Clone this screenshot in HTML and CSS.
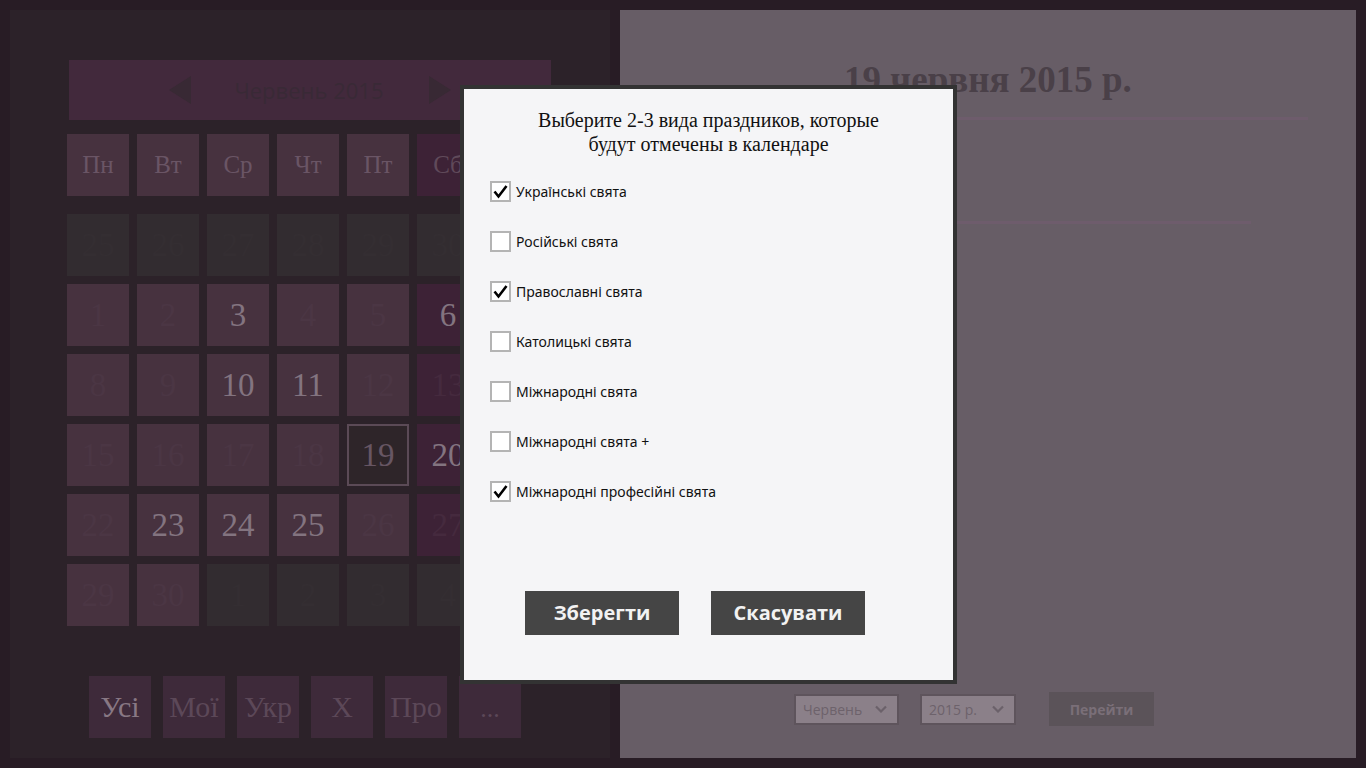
FILE: index.html
```html
<!DOCTYPE html>
<html lang="uk">
<head>
<meta charset="utf-8">
<title>Календар свят</title>
<link rel="stylesheet" href="styles.css">
</head>
<body>
<div class="screen">
  <section class="left">
    <div class="month-bar">
      <span class="arrow arrow-left"></span>
      <span class="month-name">Червень 2015</span>
      <span class="arrow arrow-right"></span>
    </div>
    <div class="grid names">
      <div class="cell name">Пн</div>
      <div class="cell name">Вт</div>
      <div class="cell name">Ср</div>
      <div class="cell name">Чт</div>
      <div class="cell name">Пт</div>
      <div class="cell name we">Сб</div>
      <div class="cell name we">Нд</div>
    </div>
    <div class="grid days">
      <div class="cell other">25</div>
      <div class="cell other">26</div>
      <div class="cell other">27</div>
      <div class="cell other">28</div>
      <div class="cell other">29</div>
      <div class="cell other">30</div>
      <div class="cell other">31</div>

      <div class="cell">1</div>
      <div class="cell">2</div>
      <div class="cell hi">3</div>
      <div class="cell">4</div>
      <div class="cell">5</div>
      <div class="cell we hi">6</div>
      <div class="cell we hi">7</div>

      <div class="cell">8</div>
      <div class="cell">9</div>
      <div class="cell hi">10</div>
      <div class="cell hi">11</div>
      <div class="cell">12</div>
      <div class="cell we">13</div>
      <div class="cell we">14</div>

      <div class="cell">15</div>
      <div class="cell">16</div>
      <div class="cell">17</div>
      <div class="cell">18</div>
      <div class="cell today">19</div>
      <div class="cell we hi">20</div>
      <div class="cell we">21</div>

      <div class="cell">22</div>
      <div class="cell hi">23</div>
      <div class="cell hi">24</div>
      <div class="cell hi">25</div>
      <div class="cell">26</div>
      <div class="cell we">27</div>
      <div class="cell we hi">28</div>

      <div class="cell">29</div>
      <div class="cell">30</div>
      <div class="cell other">1</div>
      <div class="cell other">2</div>
      <div class="cell other">3</div>
      <div class="cell other">4</div>
      <div class="cell other">5</div>
    </div>
    <div class="filters">
      <div class="filter active">Усі</div>
      <div class="filter">Мої</div>
      <div class="filter">Укр</div>
      <div class="filter">Х</div>
      <div class="filter">Про</div>
      <div class="filter dots">...</div>
    </div>
  </section>

  <section class="right">
    <h1 class="date-title">19 червня 2015 р.</h1>
    <div class="rule rule-1"></div>
    <div class="rule rule-2"></div>
    <div class="spacer"></div>
    <div class="nav-row">
      <div class="select sel-month"><span>Червень</span>
        <svg class="chev" viewBox="0 0 12 8" width="12" height="8"><path d="M1 1.5 L6 6.5 L11 1.5" fill="none" stroke="#6b616a" stroke-width="2.2"/></svg>
      </div>
      <div class="select sel-year"><span>2015 р.</span>
        <svg class="chev" viewBox="0 0 12 8" width="12" height="8"><path d="M1 1.5 L6 6.5 L11 1.5" fill="none" stroke="#6b616a" stroke-width="2.2"/></svg>
      </div>
      <div class="go">Перейти</div>
    </div>
  </section>
</div>

<div class="dialog">
  <p class="dlg-title">Выберите 2-3 вида праздников, которые<br>будут отмечены в календаре</p>
  <ul class="options">
    <li class="opt"><span class="box checked"><svg viewBox="0 0 17 17" width="17" height="17"><path d="M2.5 8.5 L6.5 13.5 L14.5 3" fill="none" stroke="#000" stroke-width="2.6"/></svg></span><span class="label">Українські свята</span></li>
    <li class="opt"><span class="box"></span><span class="label">Російські свята</span></li>
    <li class="opt"><span class="box checked"><svg viewBox="0 0 17 17" width="17" height="17"><path d="M2.5 8.5 L6.5 13.5 L14.5 3" fill="none" stroke="#000" stroke-width="2.6"/></svg></span><span class="label">Православні свята</span></li>
    <li class="opt"><span class="box"></span><span class="label">Католицькі свята</span></li>
    <li class="opt"><span class="box"></span><span class="label">Міжнародні свята</span></li>
    <li class="opt"><span class="box"></span><span class="label">Міжнародні свята +</span></li>
    <li class="opt"><span class="box checked"><svg viewBox="0 0 17 17" width="17" height="17"><path d="M2.5 8.5 L6.5 13.5 L14.5 3" fill="none" stroke="#000" stroke-width="2.6"/></svg></span><span class="label">Міжнародні професійні свята</span></li>
  </ul>
  <div class="dlg-buttons">
    <button class="btn">Зберегти</button>
    <button class="btn">Скасувати</button>
  </div>
</div>
</body>
</html>
```

FILE: styles.css
```css
* { box-sizing: border-box; }

html, body {
  margin: 0;
  padding: 0;
  width: 1366px;
  height: 768px;
  overflow: hidden;
  background: #281c25;
}

.screen {
  display: flex;
  gap: 10px;
  padding: 10px;
  height: 768px;
}

/* ---------- left calendar panel ---------- */
.left {
  width: 600px;
  height: 748px;
  background: #2c2229;
  display: flex;
  flex-direction: column;
  padding-top: 50px;
}

.month-bar {
  margin-left: 59px;
  width: 482px;
  height: 60px;
  background: #42293c;
  display: flex;
  align-items: center;
  justify-content: center;
}

.arrow {
  width: 0;
  height: 0;
  border-top: 14px solid transparent;
  border-bottom: 14px solid transparent;
}
.arrow-left { border-right: 22px solid #382934; }
.arrow-right { border-left: 22px solid #382934; }

.month-name {
  font-family: "Open Sans", "Noto Sans", sans-serif;
  font-size: 22px;
  color: #392936;
  margin: 0 46px 0 44px;
}

.grid {
  margin-left: 57px;
  display: grid;
  grid-template-columns: repeat(7, 62px);
  gap: 8px;
}
.names { margin-top: 14px; }
.days { margin-top: 18px; }

.cell {
  height: 62px;
  background: #47323f;
  display: flex;
  align-items: center;
  justify-content: center;
  font-family: "Liberation Serif", "DejaVu Serif", serif;
  font-size: 33px;
  color: #4b3644;
}
.cell.name {
  font-size: 25px;
  color: #6a5565;
}
.cell.we { background: #3d2236; }
.cell.we { color: #452a3e; }
.cell.name.we { color: #604a5a; }
.cell.hi { color: #837480; }
.cell.other {
  background: #322c30;
  color: #342e32;
}
.cell.today {
  background: #2e2529;
  border: 2px solid #5b4a56;
  color: #675663;
}

.filters {
  margin-top: 50px;
  margin-left: 79px;
  display: flex;
  gap: 12px;
}
.filter {
  width: 62px;
  height: 62px;
  background: #3e2a3a;
  display: flex;
  align-items: center;
  justify-content: center;
  font-family: "Liberation Serif", "DejaVu Serif", serif;
  font-size: 30px;
  color: #5c4858;
}
.filter.active { color: #887884; }
.filter.dots { font-size: 26px; padding-top: 4px; }

/* ---------- right details panel ---------- */
.right {
  width: 736px;
  height: 748px;
  background: #675d66;
  display: flex;
  flex-direction: column;
  align-items: center;
}

.date-title {
  margin: 47px 0 0;
  font-family: "Liberation Serif", "DejaVu Serif", serif;
  font-weight: bold;
  font-size: 37px;
  line-height: 46px;
  color: #4a4048;
}

.rule {
  height: 3px;
  background: #6e5c6c;
}
.rule-1 { width: 640px; margin-top: 14px; }
.rule-2 { width: 526px; margin-top: 101px; }

.spacer { flex: 1; }

.nav-row {
  display: flex;
  align-items: center;
  margin-bottom: 32px;
  margin-right: 28px;
}

.select {
  height: 31px;
  background: #8b8089;
  border: 2px solid #5e545c;
  display: flex;
  align-items: center;
  justify-content: space-between;
  padding: 0 10px 0 7px;
  font-family: "Open Sans", "Noto Sans", sans-serif;
  font-size: 14px;
  color: #6d626b;
}
.sel-month { width: 105px; }
.sel-year { width: 96px; margin-left: 21px; }
.chev { display: block; }

.go {
  margin-left: 33px;
  width: 105px;
  height: 34px;
  background: #5b5359;
  display: flex;
  align-items: center;
  justify-content: center;
  font-family: "Open Sans", "Noto Sans", sans-serif;
  font-weight: bold;
  font-size: 14px;
  color: #7a6f78;
}

/* ---------- modal dialog ---------- */
.dialog {
  position: absolute;
  left: 460px;
  top: 85px;
  width: 497px;
  height: 599px;
  background: #f5f5f7;
  border: 4px solid #333333;
  display: flex;
  flex-direction: column;
}

.dlg-title {
  margin: 19px 0 0;
  text-align: center;
  font-family: "Liberation Serif", "DejaVu Serif", serif;
  font-size: 20px;
  line-height: 24px;
  color: #111;
}

.options {
  list-style: none;
  margin: 25px 0 0;
  padding: 0 0 0 26px;
  display: flex;
  flex-direction: column;
  gap: 29px;
}
.opt {
  display: flex;
  align-items: center;
  height: 21px;
  font-family: "Noto Sans", "Open Sans", sans-serif;
  font-size: 14px;
  color: #111;
}
.box {
  flex: none;
  width: 21px;
  height: 21px;
  background: #fff;
  border: 2px solid #b4b4b4;
  margin-right: 5px;
  display: flex;
  align-items: center;
  justify-content: center;
}
.box svg { display: block; }
.label { white-space: nowrap; }

.dlg-buttons {
  margin-top: 89px;
  padding-left: 61px;
  display: flex;
  gap: 32px;
}
.btn {
  width: 154px;
  height: 44px;
  border: none;
  background: #454545;
  color: #f2f2f2;
  font-family: "Open Sans", "Noto Sans", sans-serif;
  font-weight: 700;
  font-size: 20px;
  padding: 0 0 2px;
}
```
